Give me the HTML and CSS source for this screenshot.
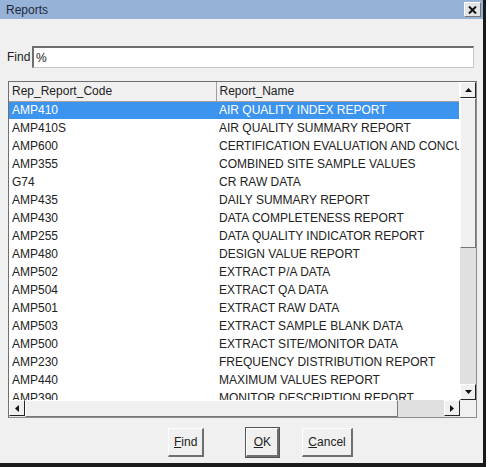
FILE: index.html
```html
<!DOCTYPE html>
<html lang="en">
<head>
  <meta charset="UTF-8">
  <title>Reports</title>
  <link rel="stylesheet" href="styles.css">
</head>
<body>
  <div class="window">
    <div class="titlebar">
      <span class="title">Reports</span>
      <span class="close"><svg width="9" height="8" viewBox="0 0 9 8"><path d="M1 0.5 L8 7.5 M8 0.5 L1 7.5" stroke="#111" stroke-width="2"/></svg></span>
    </div>

    <div class="find-row">
      <label for="find">Find</label>
      <input id="find" type="text" value="%">
    </div>

    <div class="grid">
      <div class="list">
        <table>
          <thead>
            <tr><th class="c1">Rep_Report_Code</th><th class="c2">Report_Name</th></tr>
          </thead>
          <tbody>
            <tr class="sel"><td>AMP410</td><td>AIR QUALITY INDEX REPORT</td></tr>
            <tr><td>AMP410S</td><td>AIR QUALITY SUMMARY REPORT</td></tr>
            <tr><td>AMP600</td><td>CERTIFICATION EVALUATION AND CONCURRENCE</td></tr>
            <tr><td>AMP355</td><td>COMBINED SITE SAMPLE VALUES</td></tr>
            <tr><td>G74</td><td>CR RAW DATA</td></tr>
            <tr><td>AMP435</td><td>DAILY SUMMARY REPORT</td></tr>
            <tr><td>AMP430</td><td>DATA COMPLETENESS REPORT</td></tr>
            <tr><td>AMP255</td><td>DATA QUALITY INDICATOR REPORT</td></tr>
            <tr><td>AMP480</td><td>DESIGN VALUE REPORT</td></tr>
            <tr><td>AMP502</td><td>EXTRACT P/A DATA</td></tr>
            <tr><td>AMP504</td><td>EXTRACT QA DATA</td></tr>
            <tr><td>AMP501</td><td>EXTRACT RAW DATA</td></tr>
            <tr><td>AMP503</td><td>EXTRACT SAMPLE BLANK DATA</td></tr>
            <tr><td>AMP500</td><td>EXTRACT SITE/MONITOR DATA</td></tr>
            <tr><td>AMP230</td><td>FREQUENCY DISTRIBUTION REPORT</td></tr>
            <tr><td>AMP440</td><td>MAXIMUM VALUES REPORT</td></tr>
            <tr><td>AMP390</td><td>MONITOR DESCRIPTION REPORT</td></tr>
          </tbody>
        </table>
      </div>

      <div class="vscroll">
        <span class="arrow up"><svg width="7" height="4" viewBox="0 0 7 4"><path d="M0 4 L3.5 0 L7 4 Z" fill="#111"/></svg></span>
        <span class="vthumb"></span>
        <span class="vtrack"></span>
        <span class="arrow down"><svg width="7" height="4" viewBox="0 0 7 4"><path d="M0 0 L3.5 4 L7 0 Z" fill="#111"/></svg></span>
      </div>

      <div class="hscroll">
        <span class="arrow left"><svg width="4" height="7" viewBox="0 0 4 7"><path d="M4 0 L0 3.5 L4 7 Z" fill="#111"/></svg></span>
        <span class="hthumb"></span>
        <span class="htrack"></span>
        <span class="arrow right"><svg width="4" height="7" viewBox="0 0 4 7"><path d="M0 0 L4 3.5 L0 7 Z" fill="#111"/></svg></span>
      </div>
      <div class="corner"></div>
    </div>

    <div class="buttons">
      <button class="btn find"><u>F</u>ind</button>
      <button class="btn ok default"><u>O</u>K</button>
      <button class="btn"><u>C</u>ancel</button>
    </div>
  </div>
</body>
</html>
```

FILE: styles.css
```css
* { margin:0; padding:0; box-sizing:border-box; }
body { font-family:'Liberation Sans', Arial, sans-serif; font-size:12px; color:#222; background:#fff; }

.window {
  width:486px; height:467px;
  background:#f0f0f0;
  border-right:3px solid #1a1a1a; border-bottom:4px solid #1a1a1a;
  display:flex; flex-direction:column;
}

.titlebar {
  height:19px; background:#96b3d7;
  display:flex; justify-content:space-between; align-items:center;
  padding:0 2px 0 6px;
}
.title { font-size:12px; color:#1e2a3a; }
.close {
  width:17px; height:15px; background:#e2e4e8;
  border:1px solid #fff; border-right-color:#777; border-bottom-color:#777;
  display:flex; align-items:center; justify-content:center;
}

.find-row {
  display:flex; align-items:center;
  margin-top:27px; padding:0 7px 0 7px;
  height:22px;
}
.find-row label { width:25px; font-size:12px; }
.find-row input {
  flex:1; height:22px; margin-right:2px;
  border:1px solid #c8c8c8; border-top:2px solid #6e6e6e; border-left:2px solid #6e6e6e;
  background:#fff; font-family:inherit; font-size:12px; color:#222;
  padding:0 2px; outline:none;
}

.grid {
  margin:13px 0 0 8px; width:469px; height:337px;
  border:1px solid #8c8c8c; border-top-color:#6f6f6f; border-left-color:#6f6f6f;
  display:grid; grid-template-columns:1fr 16px; grid-template-rows:1fr 17px;
  background:#fff;
}
.list { overflow:hidden; }
table { border-collapse:collapse; table-layout:fixed; width:450px; white-space:nowrap; }
th {
  height:19px; background:#f0f0f0; font-weight:normal; text-align:left;
  padding:0 3px; border-bottom:1px solid #a0a0a0; overflow:hidden;
}
th.c1 { width:207px; border-right:1px solid #a0a0a0; }
td { height:18px; padding:0 3px; overflow:hidden; }
tr.sel td { background:#3c94ee; color:#fff; }

.vscroll { display:flex; flex-direction:column; background:#e6e6e6; }
.arrow {
  display:flex; align-items:center; justify-content:center;
  width:16px; height:16px; background:#f0f0f0;
  border:1px solid #fff; border-right-color:#222; border-bottom-color:#222;
}
.vthumb {
  height:150px; background:#f0f0f0;
  border:1px solid #fff; border-right-color:#777; border-bottom-color:#777;
}
.vtrack { flex:1; background:#e0e0e0; }

.hscroll { display:flex; background:#e6e6e6; }
.hthumb {
  flex:1; background:#f0f0f0;
  border:1px solid #fff; border-right-color:#777; border-bottom-color:#777;
}
.htrack { width:46px; background:#e0e0e0; }
.corner { background:#f0f0f0; }

.buttons { display:flex; align-items:center; margin-top:10px; padding-left:168px; }
.btn {
  height:29px; padding:0 5px;
  background:#f0f0f0; color:#222;
  border:1px solid #fff; border-right:2px solid #6e6e6e; border-bottom:2px solid #6e6e6e;
  font-family:inherit; font-size:12px;
}
.btn u { text-decoration:underline; }
.btn.find { margin-right:42px; }
.btn.ok { width:33px; margin-right:23px; }
.btn.default { outline:1px solid #555; }
```
